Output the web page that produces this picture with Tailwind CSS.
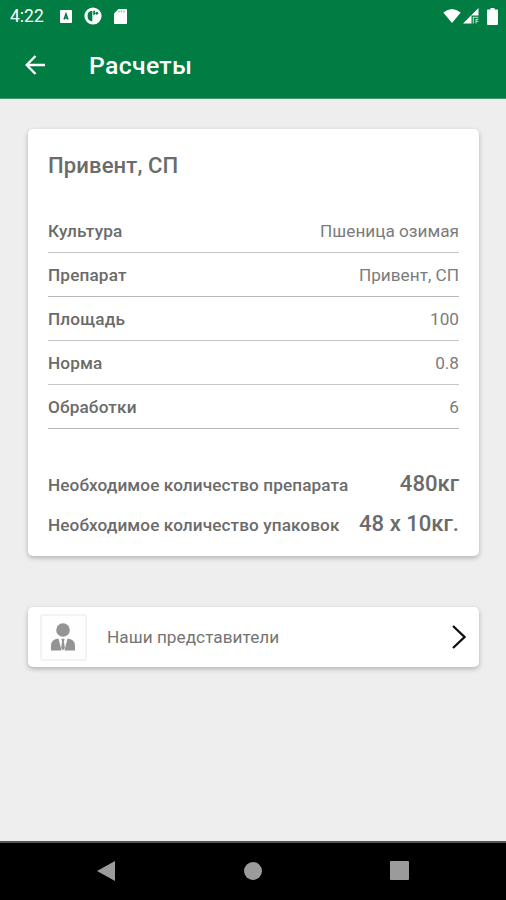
<!DOCTYPE html>
<html lang="ru">
<head>
<meta charset="utf-8">
<title>Расчеты</title>
<script src="https://cdn.jsdelivr.net/npm/@tailwindcss/browser@4"></script>
</head>
<body class="flex h-[900px] w-[506px] flex-col overflow-hidden bg-[#eeeeee] font-['Roboto',sans-serif] text-[#6b6b6b]">
<header class="h-[99px] shrink-0 border-b border-[#3f9767] bg-[#017c42] text-white">
  <div class="flex h-8 items-center pl-[10px] pr-2">
    <span class="w-[50px] text-[17.5px] leading-8">4:22</span>
    <svg class="h-[13px] w-3" viewBox="0 0 12 13"><rect width="12" height="13" rx="1" fill="#fff"/><path d="M4 9.500 6 4 8 9.500M4.800 8h2.400" fill="none" stroke="#017c42" stroke-width="1.500"/></svg>
    <svg class="ml-3 h-[18px] w-[18px]" viewBox="0 0 18 18"><circle cx="9" cy="9" r="8.600" fill="#fff"/><path d="M8.300 3.700v10.600C5 14.200 3.600 12 3.600 9S5 3.800 8.300 3.700Z" fill="#017c42"/><path d="M9.300 3.800H11v3.500l-1.700 1.200Z" fill="#017c42"/><circle cx="12.800" cy="6.300" r="1.400" fill="#017c42"/></svg>
    <svg class="ml-3 h-[15px] w-[13px]" viewBox="0 0 13 15"><path d="M4.500 0H12q1 0 1 1v13q0 1-1 1H1q-1 0-1-1V4.500Z" fill="#fff"/><path d="M5 1.500v2M7.500 1.500v2M10 1.500v2" stroke="#017c42" stroke-opacity=".5" stroke-width="1.200"/></svg>
    <svg class="ml-auto h-4 w-[18px]" viewBox="0 0 19 16"><path d="M.3 4.200Q9.500-3.200 18.700 4.200L9.500 15.500Z" fill="#fff"/></svg>
    <svg class="ml-[2px] h-4 w-4" viewBox="0 0 16 16"><path d="M15.500 0v7.500H8.500v8H0Z" fill="#fff"/><path d="M10.300 15.500V9.200h5.200M13 11.300h2.500M13 13.300h2.500M13 11v4.500" fill="none" stroke="#fff" stroke-opacity=".75" stroke-width="1.100"/></svg>
    <svg class="ml-2 h-[17px] w-[11px]" viewBox="0 0 11 17"><path d="M3.500 0h4v1.500H10q1 0 1 1V16q0 1-1 1H1q-1 0-1-1V2.500q0-1 1-1h2.500Z" fill="#fff"/></svg>
  </div>
  <div class="flex h-[66px] items-center pl-[25px]">
    <svg class="h-5 w-5" viewBox="0 0 20 20" fill="none" stroke="#fff" stroke-width="2.400"><path d="M20 10H2M10.500 1 1.700 10l8.800 9"/></svg>
    <h1 class="ml-[44px] pt-[2px] text-[24.8px] leading-[32px] font-medium tracking-[0.32px]">Расчеты</h1>
  </div>
</header>
<main class="flex-1 px-7 pt-[30px]">
  <section class="mr-[-1px] h-[427px] rounded-[5px] bg-white px-5 pt-5 shadow-[0_2px_5px_rgba(0,0,0,0.26)]">
    <h2 class="text-[22.1px] leading-8 font-medium tracking-[0.1px]">Привент, СП</h2>
    <dl class="mt-7 text-[17.2px]">
      <div class="flex h-11 items-center justify-between border-b-[1.500px] border-[#c5c5c5] pt-[2px]"><dt class="font-medium tracking-[0.14px]">Культура</dt><dd class="text-[#7b7b7b]">Пшеница озимая</dd></div>
      <div class="flex h-11 items-center justify-between border-b-[1.500px] border-[#b8b8b8] pt-[2px]"><dt class="font-medium tracking-[0.14px]">Препарат</dt><dd class="text-[#7b7b7b]">Привент, СП</dd></div>
      <div class="flex h-11 items-center justify-between border-b-[1.500px] border-[#c5c5c5] pt-[2px]"><dt class="font-medium tracking-[0.14px]">Площадь</dt><dd class="text-[#7b7b7b]">100</dd></div>
      <div class="flex h-11 items-center justify-between border-b-[1.500px] border-[#c5c5c5] pt-[2px]"><dt class="font-medium tracking-[0.14px]">Норма</dt><dd class="text-[#7b7b7b]">0.8</dd></div>
      <div class="flex h-11 items-center justify-between border-b-[1.500px] border-[#b8b8b8] pt-[2px]"><dt class="font-medium tracking-[0.14px]">Обработки</dt><dd class="text-[#7b7b7b]">6</dd></div>
    </dl>
    <dl class="mt-[34px] whitespace-nowrap font-medium">
      <div class="flex h-[39.5px] items-baseline justify-between leading-10"><dt class="text-[17.200px] tracking-[0.09px]">Необходимое количество препарата</dt><dd class="text-[22.100px]">480кг</dd></div>
      <div class="flex h-[39.5px] items-baseline justify-between leading-10"><dt class="text-[17.200px] tracking-[0.09px]">Необходимое количество упаковок</dt><dd class="text-[22.100px]">48 x 10кг.</dd></div>
    </dl>
  </section>
  <section class="mt-[51px] mr-[-1px] flex h-[60px] items-center rounded-[5px] bg-white pr-[13px] pl-3 shadow-[0_2px_5px_rgba(0,0,0,0.26)]">
    <div class="flex h-[47px] w-[47px] items-center justify-center rounded-[3px] border-2 border-[#f3f3f3] bg-[#fefefe]">
      <svg class="mr-px h-7 w-6" viewBox="0 0 24 28" fill="#949494"><circle cx="12" cy="7" r="6.800"/><path d="M0 27.500v-5q0-6 7.500-7l3 12Zm24 0v-5q0-6-7.500-7l-3 12Z"/><path d="m10.300 16.300 1.700-.8 1.700.8-.8 2.200 1 6.500-1.900 2.500-1.900-2.500 1-6.500Z"/></svg>
    </div>
    <span class="ml-5 pt-[2px] text-[17.200px] tracking-[0.04px] text-[#747474]">Наши представители</span>
    <svg class="ml-auto h-6 w-[14px]" viewBox="0 0 14 24" fill="none" stroke="#111" stroke-width="2.300"><path d="M1 1l11.500 11L1 23"/></svg>
  </section>
</main>
<nav class="flex h-[59px] shrink-0 items-center justify-between border-t-2 border-[#555] bg-black pr-[97px] pb-[2px] pl-[97px]">
  <svg class="h-5 w-[18px]" viewBox="0 0 18 20"><path d="M0 10 18 0v20Z" fill="#9b9b9b"/></svg>
  <div class="h-[18px] w-[18px] rounded-full bg-[#9b9b9b]"></div>
  <div class="h-[19px] w-[19px] rounded-[1px] bg-[#9b9b9b]"></div>
</nav>
</body>
</html>
